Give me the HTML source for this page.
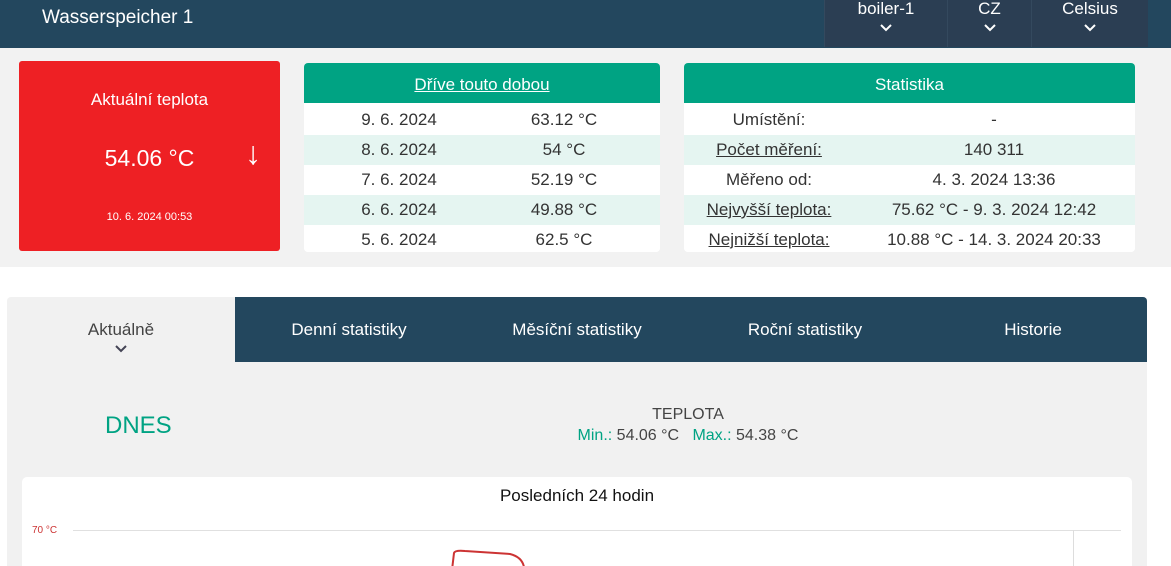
<html style="overflow:hidden;height:566px"><head><style>
body{margin:0;width:1171px;height:566px;overflow:hidden;background:#f2f2f2;font-family:"Liberation Sans",sans-serif;position:relative}
.a{position:absolute}
.hdr{left:0;top:0;width:1171px;height:48px;background:#23475e}
.dd{top:0;height:47px;background:#2b3e53;color:#fff;font-size:17px;text-align:center;line-height:18px;border-left:1px solid #34495e}
.dd svg{display:block;margin:6px auto 0}
.tbl{background:#fff;border-radius:4px;overflow:hidden}
.th{height:40px;background:#00a383;color:#fff;font-size:17px;line-height:44px;text-align:center}
.r{height:30px;line-height:30px;font-size:17px;color:#333;display:flex}
.r div{text-align:center}
u{text-decoration:underline}
</style></head><body>
<div class="a hdr"></div>
<div class="a" style="left:42px;top:7px;color:#fff;font-size:19px">Wasserspeicher 1</div>
<div class="a dd" style="left:824px;width:122px">boiler-1<svg width="12" height="8"><path d="M1 1 L6 6 L11 1" fill="none" stroke="#fff" stroke-width="2"/></svg></div>
<div class="a dd" style="left:947px;width:83px">CZ<svg width="12" height="8"><path d="M1 1 L6 6 L11 1" fill="none" stroke="#fff" stroke-width="2"/></svg></div>
<div class="a dd" style="left:1031px;width:116px">Celsius<svg width="12" height="8"><path d="M1 1 L6 6 L11 1" fill="none" stroke="#fff" stroke-width="2"/></svg></div>

<div class="a" style="left:19px;top:61px;width:261px;height:190px;background:#ee2024;border-radius:3px;color:#fff">
<div class="a" style="left:0;width:261px;top:29px;text-align:center;font-size:17px">Aktuální teplota</div>
<div class="a" style="left:0;width:261px;top:84px;text-align:center;font-size:23px">54.06 °C</div>
<div class="a" style="left:226px;top:74px;font-size:32px">&#8595;</div>
<div class="a" style="left:0;width:261px;top:150px;text-align:center;font-size:11px">10. 6. 2024 00:53</div>
</div>
<div class="a tbl" style="left:304px;top:63px;width:356px;height:189px">
<div class="th"><u>Dříve touto dobou</u></div>
<div style="padding-top:2px">
<div class="r" style="background:#fff"><div style="width:190px">9. 6. 2024</div><div style="width:140px">63.12 °C</div></div>
<div class="r" style="background:#e5f5f1"><div style="width:190px">8. 6. 2024</div><div style="width:140px">54 °C</div></div>
<div class="r" style="background:#fff"><div style="width:190px">7. 6. 2024</div><div style="width:140px">52.19 °C</div></div>
<div class="r" style="background:#e5f5f1"><div style="width:190px">6. 6. 2024</div><div style="width:140px">49.88 °C</div></div>
<div class="r" style="background:#fff"><div style="width:190px">5. 6. 2024</div><div style="width:140px">62.5 °C</div></div>
</div></div>
<div class="a tbl" style="left:684px;top:63px;width:451px;height:189px">
<div class="th">Statistika</div>
<div style="padding-top:2px">
<div class="r" style="background:#fff"><div style="width:170px">Umístění:</div><div style="width:280px">-</div></div>
<div class="r" style="background:#e5f5f1"><div style="width:170px"><u>Počet měření:</u></div><div style="width:280px">140 311</div></div>
<div class="r" style="background:#fff"><div style="width:170px">Měřeno od:</div><div style="width:280px">4. 3. 2024 13:36</div></div>
<div class="r" style="background:#e5f5f1"><div style="width:170px"><u>Nejvyšší teplota:</u></div><div style="width:280px">75.62 °C - 9. 3. 2024 12:42</div></div>
<div class="r" style="background:#fff"><div style="width:170px"><u>Nejnižší teplota:</u></div><div style="width:280px">10.88 °C - 14. 3. 2024 20:33</div></div>
</div></div>

<div class="a" style="left:0;top:267px;width:1171px;height:299px;background:#fff"></div>
<div class="a" style="left:7px;top:297px;width:1140px;height:269px;background:#f1f1f1;border-radius:4px 4px 0 0"></div>
<div class="a" style="left:235px;top:297px;width:912px;height:65px;background:#23475e;border-radius:0 4px 0 0"></div>
<div class="a" style="left:7px;top:320px;width:228px;text-align:center;font-size:17px;color:#444">Aktuálně<svg style="display:block;margin:5px auto 0" width="12" height="8"><path d="M1 1 L6 6 L11 1" fill="none" stroke="#445" stroke-width="2"/></svg></div>
<div class="a" style="left:235px;top:320px;width:228px;text-align:center;font-size:17px;color:#fff">Denní statistiky</div>
<div class="a" style="left:463px;top:320px;width:228px;text-align:center;font-size:17px;color:#fff">Měsíční statistiky</div>
<div class="a" style="left:691px;top:320px;width:228px;text-align:center;font-size:17px;color:#fff">Roční statistiky</div>
<div class="a" style="left:919px;top:320px;width:228px;text-align:center;font-size:17px;color:#fff">Historie</div>

<div class="a" style="left:105px;top:412px;font-size:24px;color:#00a383">DNES</div>
<div class="a" style="left:488px;top:404px;width:400px;text-align:center;font-size:16px;line-height:21px;color:#444">TEPLOTA<br><span style="color:#00a383">Min.:</span> 54.06 °C &nbsp; <span style="color:#00a383">Max.:</span> 54.38 °C</div>

<div class="a" style="left:22px;top:477px;width:1110px;height:89px;background:#fff;border-radius:5px 5px 0 0"></div>
<div class="a" style="left:22px;top:486px;width:1110px;text-align:center;font-size:17px;color:#111">Posledních 24 hodin</div>
<div class="a" style="left:32px;top:525px;font-size:10px;color:#c33">70 °C</div>
<div class="a" style="left:73px;top:530px;width:1048px;height:1px;background:#e0e0e0"></div>
<div class="a" style="left:1073px;top:530px;width:1px;height:36px;background:#ddd"></div>
<svg class="a" style="left:440px;top:545px" width="100" height="21"><path d="M12 25 L14 8 Q15 5 25 6 L70 9 Q82 12 84 22" fill="none" stroke="#c33" stroke-width="2"/></svg>
</body></html>
